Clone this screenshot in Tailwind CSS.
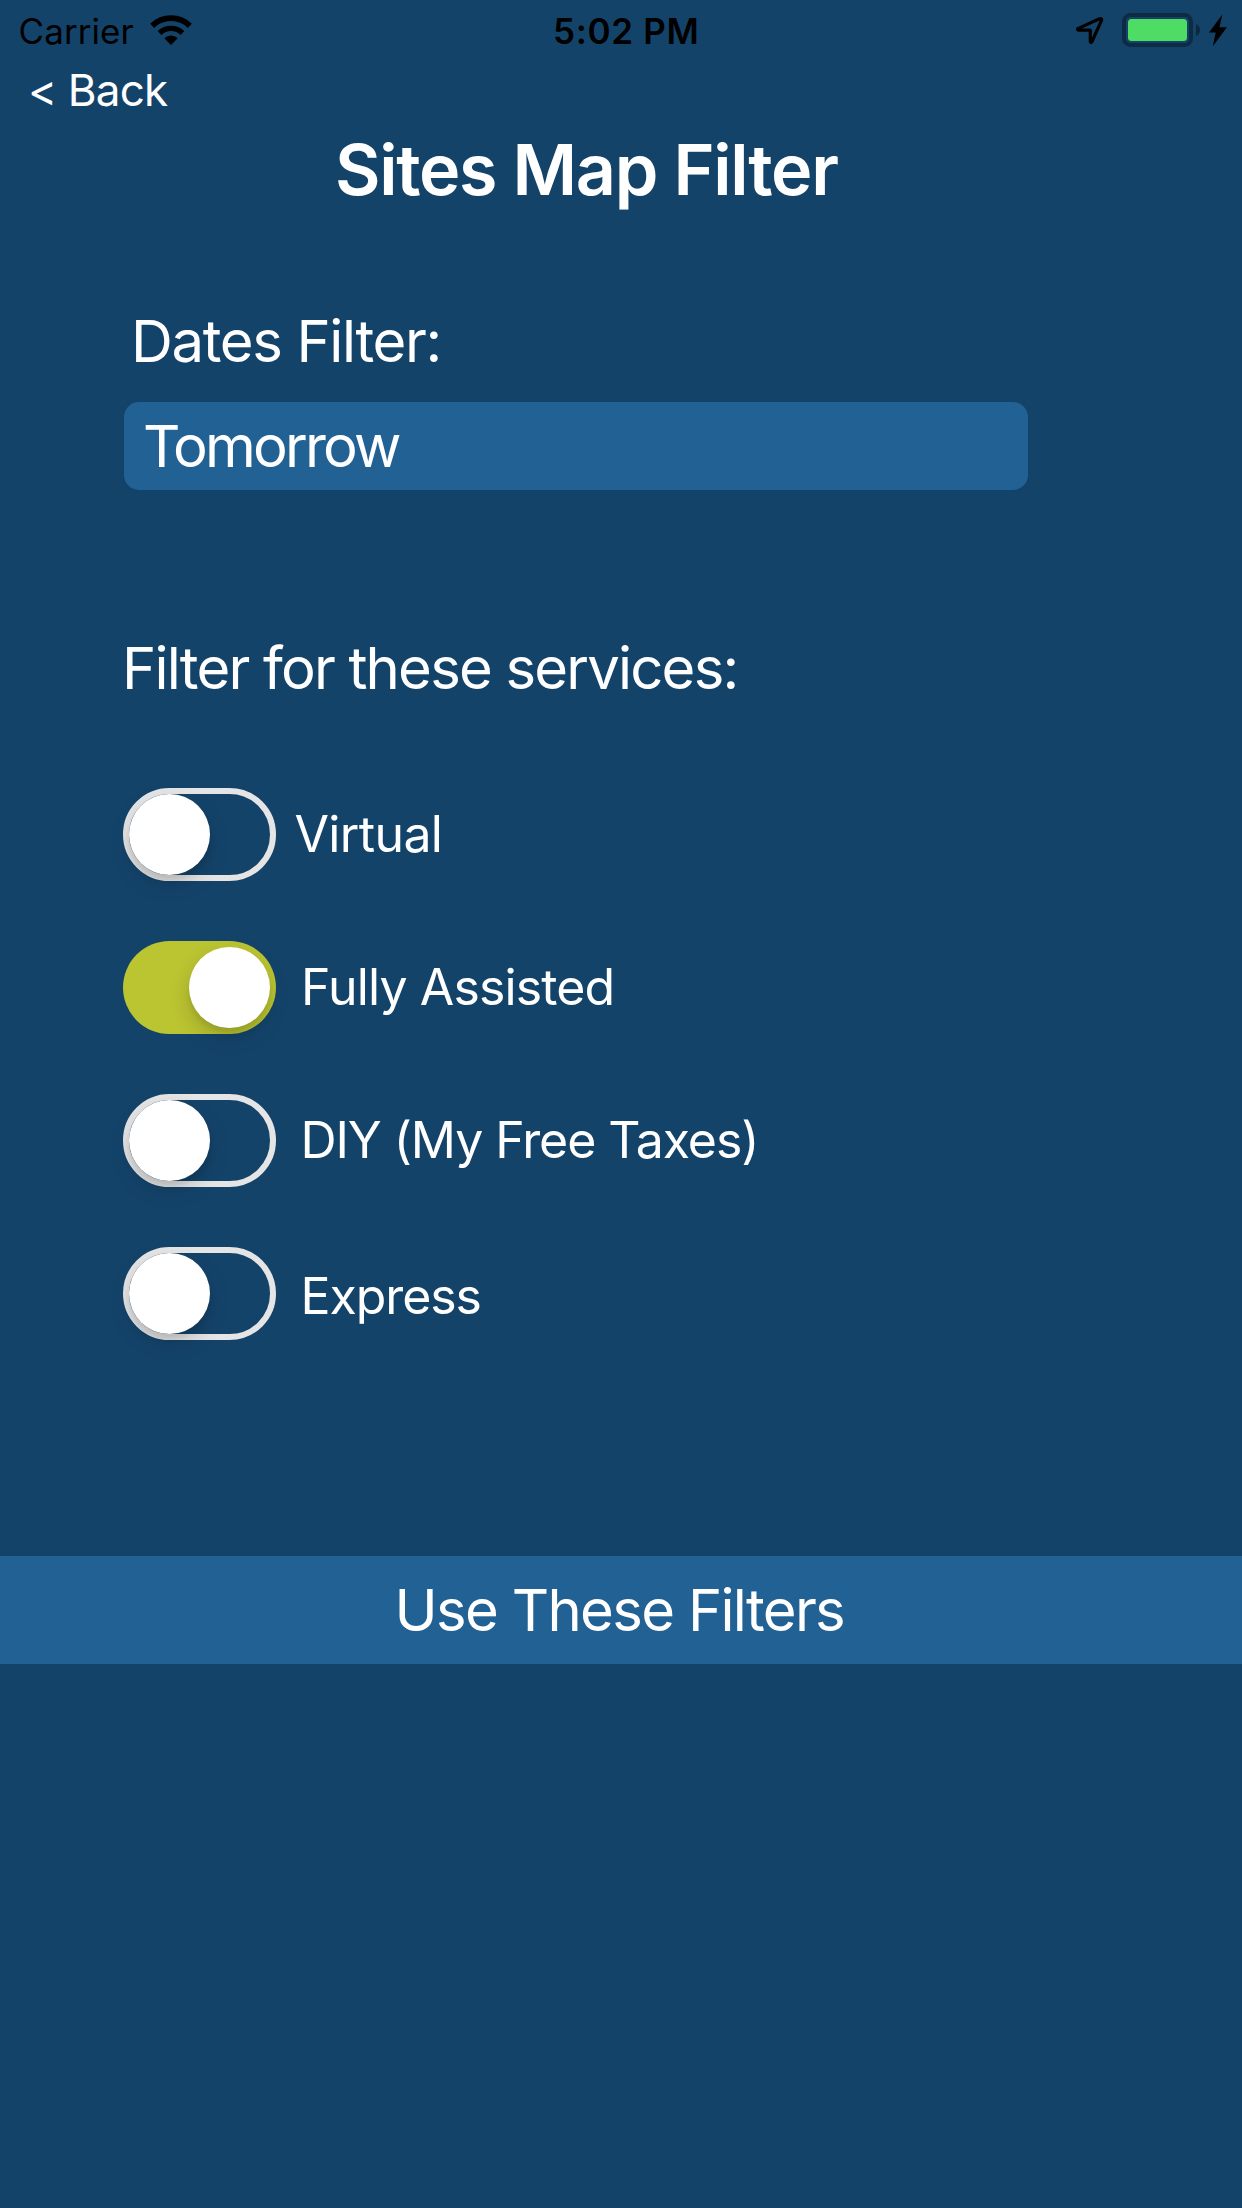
<!DOCTYPE html>
<html lang="en">
<head>
<meta charset="utf-8">
<title>Sites Map Filter</title>
<script src="https://cdn.jsdelivr.net/npm/@tailwindcss/browser@4"></script>
</head>
<body class="bg-[#14436a]">
<main class="flex h-[2208px] w-[1242px] flex-col overflow-hidden bg-[#14436a] font-[Inter,sans-serif] text-white">
  <!-- Status bar -->
  <header class="grid h-[62px] grid-cols-[553px_1fr_166px] items-center text-[35px] leading-[62px] whitespace-nowrap text-black">
    <div class="flex items-center pl-[18.500px]">
      <span class="w-[131.500px] tracking-[0.08px]">Carrier</span>
      <svg class="h-[62px] w-[42px]" viewBox="150 0 42 62" fill="none">
        <path d="M152.200 25.800A27 27 0 0 1 189.800 25.800" stroke="#000" stroke-width="5.800"/>
        <path d="M159.500 33A16.500 16.500 0 0 1 182.500 33" stroke="#000" stroke-width="5.400"/>
        <path d="M164.300 38.300A9.500 9.500 0 0 1 177.700 38.300L171 45Z" fill="#000"/>
      </svg>
    </div>
    <span class="font-semibold tracking-[0.67px]">5:02 PM</span>
    <div class="flex items-center">
      <svg class="h-[62px] w-[46px]" viewBox="1076 0 46 62" fill="none">
        <path d="M1077.800 28.600L1099.500 18.700Q1102.300 17.900 1101.400 20.600L1091.800 42Q1090.700 43.300 1090.300 41.500V30.200H1079.200Q1076.800 29.900 1077.800 28.600Z" stroke="#000" stroke-width="3.200" stroke-linejoin="round"/>
      </svg>
      <svg class="h-[62px] w-[78px]" viewBox="1122 0 78 62" fill="none">
        <rect x="1124" y="15" width="67" height="30" rx="6.500" stroke="#000" stroke-opacity=".35" stroke-width="4"/>
        <rect x="1128" y="19" width="59" height="22" rx="3.500" fill="#4fdc64"/>
        <path d="M1196 24Q1200 25.500 1200 30T1196 36Z" fill="#000" fill-opacity=".4"/>
      </svg>
      <svg class="ml-[9px] h-[62px] w-[18px]" viewBox="1209 0 18 62">
        <path d="M1222.300 14.500L1219.500 27.300H1227L1212.800 46.200L1215.700 32.500H1209Z"/>
      </svg>
    </div>
  </header>

  <a class="flex h-14 items-center pl-[28px] text-[44px] leading-[56px] tracking-[-0.82px]">&lt; Back</a>
  <h1 class="h-[103px] pl-[335px] text-[70px] leading-[103px] font-semibold tracking-[-1.3px]">Sites Map Filter</h1>

  <label class="mt-20 h-20 pl-[131px] text-[58px] leading-[80px] tracking-[-1.36px]">Dates Filter:</label>
  <div class="mt-[21px] ml-[124px] h-[88px] w-[904px] rounded-[15px] bg-[#216194] pl-[19px] text-[58px] leading-[88px] tracking-[-2.8px]">Tomorrow</div>

  <h2 class="mt-[138px] h-20 pl-[122px] text-[58px] leading-[80px] tracking-[-1.8px]">Filter for these services:</h2>

  <ul class="mt-20 flex flex-col gap-[60px] pl-[123px] text-[50px] leading-[93px]">
    <li class="flex h-[93px] items-center">
      <span class="flex h-[93px] w-[153px] rounded-full border-[6px] border-[#e5e5e5]"><span class="size-[81px] rounded-full bg-white shadow-[0_9px_20px_rgba(0,0,0,0.17),0_5px_4px_rgba(0,0,0,0.06)]"></span></span>
      <span class="ml-[18.500px] tracking-[-0.65px]">Virtual</span>
    </li>
    <li class="flex h-[93px] items-center">
      <span class="flex h-[93px] w-[153px] justify-end rounded-full bg-[#bbc431] p-[6px]"><span class="size-[81px] rounded-full bg-white shadow-[0_9px_20px_rgba(0,0,0,0.17),0_5px_4px_rgba(0,0,0,0.06)]"></span></span>
      <span class="ml-[25px] tracking-[-0.87px]">Fully Assisted</span>
    </li>
    <li class="flex h-[93px] items-center">
      <span class="flex h-[93px] w-[153px] rounded-full border-[6px] border-[#e5e5e5]"><span class="size-[81px] rounded-full bg-white shadow-[0_9px_20px_rgba(0,0,0,0.17),0_5px_4px_rgba(0,0,0,0.06)]"></span></span>
      <span class="ml-[24.500px] tracking-[-1.08px]">DIY (My Free Taxes)</span>
    </li>
    <li class="flex h-[93px] items-center">
      <span class="flex h-[93px] w-[153px] rounded-full border-[6px] border-[#e5e5e5]"><span class="size-[81px] rounded-full bg-white shadow-[0_9px_20px_rgba(0,0,0,0.17),0_5px_4px_rgba(0,0,0,0.06)]"></span></span>
      <span class="ml-[24.500px] pt-[5px] tracking-[-1.08px]">Express</span>
    </li>
  </ul>

  <button class="mt-[216px] h-[108px] shrink-0 bg-[#216194] pl-[394.500px] text-left text-[58px] leading-[108px] tracking-[-1.68px]">Use These Filters</button>
</main>
</body>
</html>
